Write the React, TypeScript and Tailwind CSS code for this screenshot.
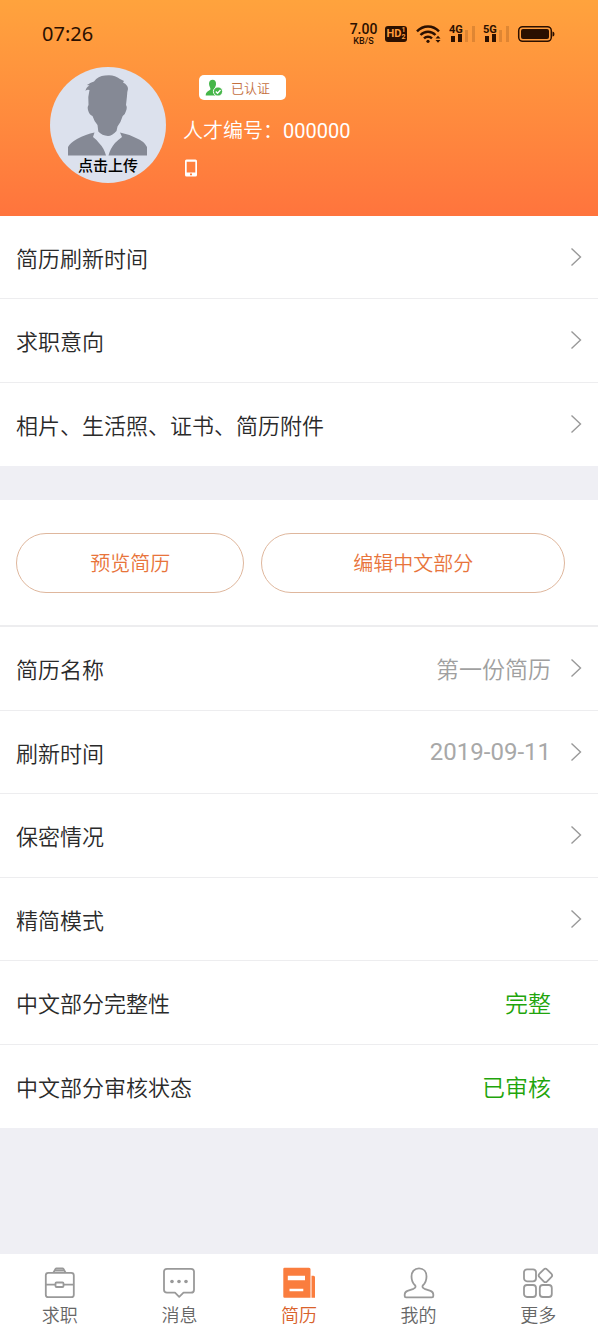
import type { ReactNode } from 'react'
import { useState } from 'react'

interface Row {
  label: string
  value?: string
  date?: string
  done?: boolean
}

const PROFILE_ROWS: Row[] = [
  { label: '简历刷新时间' },
  { label: '求职意向' },
  { label: '相片、生活照、证书、简历附件' },
]

const RESUME_ROWS: Row[] = [
  { label: '简历名称', value: '第一份简历' },
  { label: '刷新时间', date: '2019-09-11' },
  { label: '保密情况' },
  { label: '精简模式' },
  { label: '中文部分完整性', value: '完整', done: true },
  { label: '中文部分审核状态', value: '已审核', done: true },
]

function Signal({ label }: { label: string }) {
  return (
    <svg viewBox="0 0 26 20" className="h-5 w-[26px]" fill="#2b1000">
      <text x="0" y="9" fontSize="11" fontWeight="700" fontFamily="Roboto, sans-serif">
        {label}
      </text>
      <rect x="2" y="12" width="4" height="6" />
      <rect x="9" y="10" width="4" height="8" />
      <rect x="16" y="6" width="3" height="12" opacity="0.15" />
      <rect x="23" y="2" width="3" height="16" opacity="0.15" />
    </svg>
  )
}

function StatusBar() {
  return (
    <div className="flex h-[67px] items-center justify-between pl-[42px] pr-[43px] font-[Roboto,sans-serif] text-[#2b1000]">
      <span className="font-['Noto_Sans',sans-serif] text-[20px] font-normal">07:26</span>
      <div className="flex items-center gap-2">
        <div className="flex w-[27px] flex-col items-center pt-[2px]">
          <span className="text-[14px] font-medium leading-[13px]">7.00</span>
          <span className="text-[9px] font-medium leading-[10px]">KB/S</span>
        </div>
        <div className="flex h-4 w-[22px] items-center justify-center rounded-[3px] bg-[#2b1000] text-[#ff9c3c]">
          <span className="text-[11px] font-bold leading-4">HD</span>
          <span className="flex flex-col text-[7px] font-bold leading-[7px]">
            <span>1</span>
            <span>2</span>
          </span>
        </div>
        <svg viewBox="0 0 26 20" className="h-5 w-[26px]" fill="none" stroke="#2b1000" strokeWidth="2.4">
          <path d="M2 7.400C8.200 .9 17.800 .9 24 7.400" />
          <path d="M5.500 11C9.800 6.600 16.200 6.600 20.500 11" />
          <path d="M9 14.400C11.200 12.200 14.800 12.200 17 14.400" />
          <circle cx="13" cy="17.300" r="1.600" fill="#2b1000" stroke="none" />
          <path d="M20.500 14.500L23 11.800L25.500 14.500ZM20.500 16L23 18.700L25.500 16Z" fill="#2b1000" stroke="none" />
        </svg>
        <Signal label="4G" />
        <Signal label="5G" />
        <svg viewBox="0 0 38 18" className="h-[18px] w-[38px]">
          <rect x="1.700" y="1.700" width="32.600" height="14.600" rx="4" fill="none" stroke="#2b1000" strokeWidth="1.500" />
          <rect x="4" y="4" width="28" height="10" rx="2" fill="#2b1000" />
          <path d="M35.500 6.500Q37.500 6.500 37.500 9T35.500 11.500Z" fill="#2b1000" />
        </svg>
      </div>
    </div>
  )
}

function Avatar() {
  return (
    <button className="flex size-[116px] shrink-0 flex-col items-center overflow-hidden rounded-full bg-[#dce1ed]">
      <svg viewBox="0 0 116 90" className="h-[90px] w-[116px] shrink-0" fill="#858995">
        <path d="M38.500 38L38.300 30L39.500 23Q37 22 35.500 24Q36 20 39.500 18.500L37 18Q41 15 44 14.500Q48 9 55 8.500Q64 7 70 12L74 14L73 15.500Q78 18 78 22Q77 25 77 29L76 38Q77.500 40 76 44Q75 48 72.700 49Q71 55 67.500 59.500L66.500 64Q62 69 58 69Q52 68.500 48.300 64.500L47.500 58Q44 54 42.500 49Q39.500 48 38.300 44Q37 40 38.500 38Z" />
        <path d="M44.500 65.500L43 70Q47 73 49 76Q54 81 56 88.500H18V80Q20 76 27 72Q36 67 44.500 65.500Z" />
        <path d="M70 65.500L72 70Q68 73 65 76Q60 82 58.500 88.500H97V80Q94 74 86 71Q78 67 70 65.500Z" />
      </svg>
      <span className="text-[15px] font-medium leading-4 text-black">点击上传</span>
    </button>
  )
}

function Header() {
  return (
    <header className="bg-linear-to-b from-[#ffa33d] to-[#ff743d] pb-[33px]">
      <StatusBar />
      <div className="flex gap-[17px] pl-[50px]">
        <Avatar />
        <div className="flex flex-col items-start pt-2 text-white">
          <div className="ml-4 flex h-[25px] w-[87px] items-center gap-2 rounded-[5px] bg-white pl-[6px]">
            <svg viewBox="0 0 18 18" className="size-[18px]">
              <path
                d="M7.500 .8C10 .8 11.300 2.700 11 5.200C10.900 7 10 8 9.700 9.200C10 11 15 11.500 15.500 16.500H.7C.8 12.500 4 12 5.400 10.600C5.800 9 4 7.500 4 4.800C4 2.400 5.500 .8 7.500 .8Z"
                fill="#45b649"
              />
              <circle cx="13" cy="12.500" r="4.600" fill="#45b649" stroke="#fff" />
              <path d="M10.800 12.600L12.500 14.300L15.500 11" fill="none" stroke="#fff" strokeWidth="1.400" />
            </svg>
            <span className="text-[13px] leading-5 text-[#c4703f]">已认证</span>
          </div>
          <p className="mt-4 text-[20px] leading-7">
            人才编号：<span className="font-[Roboto,sans-serif] font-normal">000000</span>
          </p>
          <svg viewBox="0 0 16 18" className="mt-[14px] h-[18px] w-4">
            <path d="M3.500 .5H12.500Q14 .5 14 2V16Q14 17.500 12.500 17.500H3.500Q2 17.500 2 16V2Q2 .5 3.500 .5ZM3.700 2.700V13.500H12.300V2.700ZM7 14.500V16.200H9V14.500Z" fill="#fff" fillRule="evenodd" />
          </svg>
        </div>
      </div>
    </header>
  )
}

function ListRow({ label, value, date, done }: Row) {
  return (
    <li className="border-b border-[#ededef] last:border-b-0">
      <button className="flex h-full w-full items-center px-4 text-left">
        <span className="flex-1 text-[22px] leading-8 text-[#2a2a2a]">{label}</span>
        {value && (
          <span className={`text-[23px] leading-8 ${done ? 'mr-[31px] text-[#1fa50c]' : 'mr-[19px] text-[#a0a0a0]'}`}>
            {value}
          </span>
        )}
        {date && (
          <time className="mr-[19px] font-[Roboto,sans-serif] text-[24px] font-normal leading-8 text-[#a8a8a8]">{date}</time>
        )}
        {!done && (
          <svg viewBox="0 0 12 20" className="h-5 w-3" fill="none" stroke="#999" strokeWidth="1.400">
            <path d="M1.500 1.500L10.500 10L1.500 18.500" />
          </svg>
        )}
      </button>
    </li>
  )
}

const TABS: { name: string; icon: ReactNode }[] = [
  {
    name: '求职',
    icon: (
      <>
        <rect x="1.800" y="5.800" width="28" height="24.400" rx="2.500" />
        <path d="M9.500 5.500L11.500 2Q11.800 1.500 12.500 1.500H18.500Q19.200 1.500 19.500 2L21.500 5.500M11 3.700H20M2 17.700H11.300M19.500 17.700H29.800" />
        <rect x="11.500" y="15.500" width="8" height="4.500" rx="1" />
      </>
    ),
  },
  {
    name: '消息',
    icon: (
      <>
        <path d="M4 1.800H28Q31 1.800 31 4.800V22.700Q31 25.700 28 25.700H20.500L16.200 29.800L12 25.700H4Q1 25.700 1 22.700V4.800Q1 1.800 4 1.800Z" />
        <g fill="currentColor" stroke="none">
          <circle cx="9" cy="14.500" r="1.800" />
          <circle cx="16" cy="14.500" r="1.800" />
          <circle cx="23" cy="14.500" r="1.800" />
        </g>
      </>
    ),
  },
  {
    name: '简历',
    icon: (
      <g fill="#fa7d3e" stroke="none">
        <path d="M1.500 .8H26Q27.500 .8 27.500 2.300V30.700H1.500Q.3 30.700 .3 29.500V2Q.3 .8 1.500 .8ZM4.800 8.800V13.200H22V8.800ZM6.500 21.700V24.200H20.300V21.700Z" fillRule="evenodd" />
        <path d="M28.500 8.800H30.500Q32 8.800 32 10.300V30.700H28.500Z" />
      </g>
    ),
  },
  {
    name: '我的',
    icon: (
      <path d="M16 1.300C20.500 1.300 23.500 4.500 23.500 9.500C23.500 13 22 16.500 19.800 18.500C19 20 19.800 21 21.500 21.800L27.500 23.800Q30.300 25 30.300 27.500V29Q30.300 30.300 29 30.300H3Q1.700 30.300 1.700 29V27.500Q1.700 25 4.500 23.800L10.500 21.800C12.200 21 13 20 12.200 18.500C10 16.500 8.500 13 8.500 9.500C8.500 4.500 11.500 1.300 16 1.300Z" />
    ),
  },
  {
    name: '更多',
    icon: (
      <>
        <rect x="2" y="2.300" width="12" height="12" rx="3" />
        <rect x="2" y="18" width="12" height="12" rx="3" />
        <rect x="17.800" y="18" width="12" height="12" rx="3" />
        <rect x="18" y="3" width="10.800" height="10.800" rx="2.500" transform="rotate(45 23.400 8.400)" />
      </>
    ),
  },
]

export default function App() {
  const [tab, setTab] = useState('简历')

  return (
    <div className="flex min-h-screen flex-col bg-[#efeff4] font-['Noto_Sans_CJK_SC',sans-serif] font-[350]">
      <Header />

      <main className="flex-1">
        <ul className="grid min-h-[250px] auto-rows-fr bg-white">
          {PROFILE_ROWS.map(row => (
            <ListRow key={row.label} {...row} />
          ))}
        </ul>

        <section className="mt-[34px] bg-white">
          <div className="flex gap-[17px] border-b-2 border-[#ededef] pb-8 pl-4 pr-[33px] pt-[33px] text-[20px] text-[#e8743b]">
            <button className="h-[60px] flex-3 rounded-full border border-[#dfb79d]">预览简历</button>
            <button className="h-[60px] flex-4 rounded-full border border-[#dfb79d]">编辑中文部分</button>
          </div>
          <ul className="grid min-h-[501px] auto-rows-fr">
            {RESUME_ROWS.map(row => (
              <ListRow key={row.label} {...row} />
            ))}
          </ul>
        </section>
      </main>

      {/* Bottom tabs */}
      <nav className="grid grid-cols-5 bg-white">
        {TABS.map(({ name, icon }) => (
          <button
            key={name}
            onClick={() => setTab(name)}
            className={`flex flex-col items-center gap-[3px] pb-[10px] pt-[13px] ${
              tab === name ? 'text-[#d9622b]' : 'text-[#666]'
            }`}
          >
            <svg viewBox="0 0 32 32" className="size-8 text-[#999]" fill="none" stroke="currentColor" strokeWidth="1.800" strokeLinejoin="round">
              {icon}
            </svg>
            <span className="text-[18px] leading-6">{name}</span>
          </button>
        ))}
      </nav>
    </div>
  )
}
